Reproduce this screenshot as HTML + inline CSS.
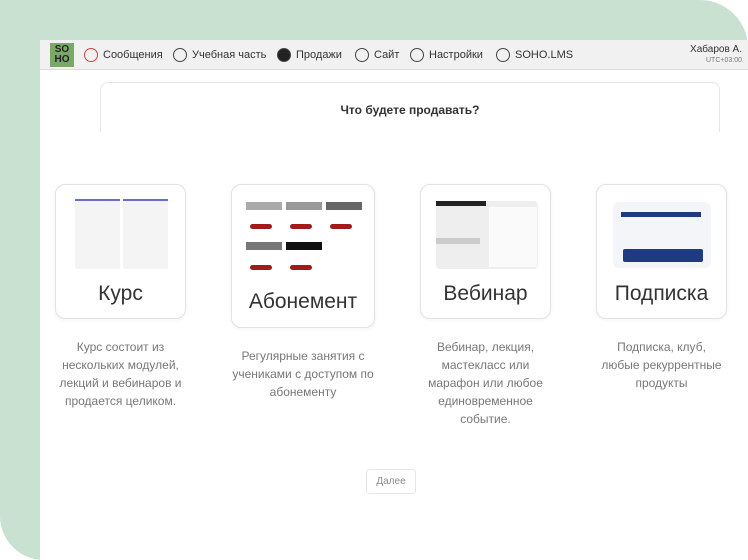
<!DOCTYPE html>
<html><head><meta charset="utf-8"><style>
*{margin:0;padding:0;box-sizing:border-box}
body{width:748px;height:560px;background:#fff;position:relative;overflow:hidden;font-family:"Liberation Sans",sans-serif;color:#333}
.green{position:absolute;left:0;top:0;width:748px;height:560px;background:#c9e1d1;border-radius:0 48px 0 44px}
.app{position:absolute;left:40px;top:40px;width:708px;height:520px;background:#fff}
.hdr{height:30px;background:#f1f1f1;border-bottom:1px solid #ddd;position:relative;font-size:11px;color:#333}
.logo{position:absolute;left:10px;top:3px;width:24px;height:24px;background:#7aa86a;color:#222;font-size:10px;font-weight:bold;line-height:10px;text-align:center;padding-top:2px}
.nav{position:absolute;top:8px;display:flex;align-items:center;gap:5px}
.c{width:14px;height:14px;border:1.5px solid #444;border-radius:50%;display:inline-block}
.user{position:absolute;right:6px;top:4px;text-align:right;font-size:10px}
.user small{display:block;font-size:7px;color:#777;margin-top:2px}
.panel{position:absolute;left:60px;top:42px;width:620px;height:50px;border:1px solid #e6e6e6;border-bottom:none;border-radius:8px 8px 0 0;text-align:center;font-size:12px;font-weight:bold;padding-top:20px;color:#333}
.card{position:absolute;background:#fff;border:1px solid #e2e2e2;border-radius:10px;box-shadow:0 1px 4px rgba(0,0,0,.05);text-align:center}
.card .t{position:absolute;left:0;right:0;font-size:21px;color:#333}
.desc{position:absolute;text-align:center;font-size:12px;line-height:18px;color:#777}
.btn{position:absolute;left:326px;top:429px;width:50px;height:25px;border:1px solid #e6e6e6;border-radius:3px;font-size:10px;color:#888;text-align:center;line-height:23px}
.th{position:absolute;background:#f4f4f4}
</style></head><body>
<div class="green"></div>
<div class="app">
 <div class="hdr">
  <div class="logo">SO<br>HO</div>
  <div class="nav" style="left:44px"><span class="c" style="border-color:#c44"></span><span>Сообщения</span></div>
  <div class="nav" style="left:133px"><span class="c"></span><span>Учебная часть</span></div>
  <div class="nav" style="left:237px"><span class="c" style="background:#222"></span><span>Продажи</span></div>
  <div class="nav" style="left:315px"><span class="c"></span><span>Сайт</span></div>
  <div class="nav" style="left:370px"><span class="c"></span><span>Настройки</span></div>
  <div class="nav" style="left:456px"><span class="c"></span><span>SOHO.LMS</span></div>
  <div class="user">Хабаров А.<small>UTC+03:00</small></div>
 </div>
 <div class="panel">Что будете продавать?</div>

 <div class="card" style="left:15px;top:144px;width:131px;height:135px">
  <div class="th" style="left:19px;top:14px;width:45px;height:70px;border-top:2px solid #6670cc"></div>
  <div class="th" style="left:67px;top:14px;width:45px;height:70px;border-top:2px solid #6670cc"></div>
  <div class="t" style="top:97px">Курс</div>
 </div>
 <div class="card" style="left:191px;top:144px;width:144px;height:144px">
  <div class="th" style="left:14px;top:17px;width:36px;height:8px;background:#aaa"></div>
  <div class="th" style="left:54px;top:17px;width:36px;height:8px;background:#999"></div>
  <div class="th" style="left:94px;top:17px;width:36px;height:8px;background:#666"></div>
  <div class="th" style="left:18px;top:39px;width:22px;height:5px;background:#a01c1c;border-radius:3px"></div>
  <div class="th" style="left:58px;top:39px;width:22px;height:5px;background:#a01c1c;border-radius:3px"></div>
  <div class="th" style="left:98px;top:39px;width:22px;height:5px;background:#a01c1c;border-radius:3px"></div>
  <div class="th" style="left:14px;top:57px;width:36px;height:8px;background:#777"></div>
  <div class="th" style="left:54px;top:57px;width:36px;height:8px;background:#111"></div>
  <div class="th" style="left:18px;top:80px;width:22px;height:5px;background:#a01c1c;border-radius:3px"></div>
  <div class="th" style="left:58px;top:80px;width:22px;height:5px;background:#a01c1c;border-radius:3px"></div>
  <div class="t" style="top:105px">Абонемент</div>
 </div>
 <div class="card" style="left:380px;top:144px;width:131px;height:135px">
  <div class="th" style="left:15px;top:16px;width:102px;height:68px;background:#eee;border-radius:4px"></div>
  <div class="th" style="left:15px;top:16px;width:50px;height:5px;background:#222"></div>
  <div class="th" style="left:15px;top:53px;width:44px;height:6px;background:#ccc"></div>
  <div class="th" style="left:68px;top:22px;width:48px;height:60px;background:#fafafa"></div>
  <div class="t" style="top:97px">Вебинар</div>
 </div>
 <div class="card" style="left:556px;top:144px;width:131px;height:135px">
  <div class="th" style="left:16px;top:17px;width:98px;height:66px;background:#f3f5f8;border-radius:6px"></div>
  <div class="th" style="left:24px;top:27px;width:80px;height:5px;background:#1f3a80"></div>
  <div class="th" style="left:26px;top:64px;width:80px;height:13px;background:#1f3a80;border-radius:2px"></div>
  <div class="t" style="top:97px">Подписка</div>
 </div>

 <div class="desc" style="left:10px;top:298px;width:141px">Курс состоит из нескольких модулей, лекций и вебинаров и продается целиком.</div>
 <div class="desc" style="left:188px;top:307px;width:150px">Регулярные занятия с учениками с доступом по абонементу</div>
 <div class="desc" style="left:385px;top:298px;width:121px">Вебинар, лекция, мастекласс или марафон или любое единовременное событие.</div>
 <div class="desc" style="left:556px;top:298px;width:131px">Подписка, клуб,<br>любые рекуррентные продукты</div>
 <div class="btn">Далее</div>
</div>
</body></html>
